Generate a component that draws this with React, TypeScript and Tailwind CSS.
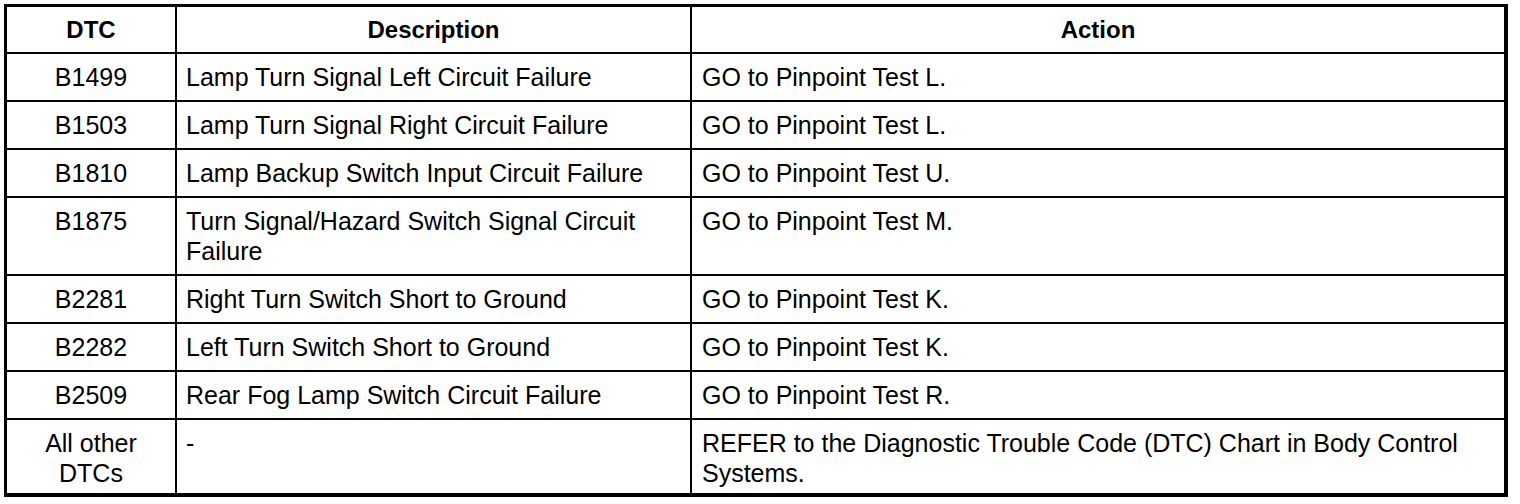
import React from 'react';

type Row = { dtc: string; description: string; action: string };

const ROWS: Row[] = [
  { dtc: 'B1499', description: 'Lamp Turn Signal Left Circuit Failure', action: 'GO to Pinpoint Test L.' },
  { dtc: 'B1503', description: 'Lamp Turn Signal Right Circuit Failure', action: 'GO to Pinpoint Test L.' },
  { dtc: 'B1810', description: 'Lamp Backup Switch Input Circuit Failure', action: 'GO to Pinpoint Test U.' },
  { dtc: 'B1875', description: 'Turn Signal/Hazard Switch Signal Circuit Failure', action: 'GO to Pinpoint Test M.' },
  { dtc: 'B2281', description: 'Right Turn Switch Short to Ground', action: 'GO to Pinpoint Test K.' },
  { dtc: 'B2282', description: 'Left Turn Switch Short to Ground', action: 'GO to Pinpoint Test K.' },
  { dtc: 'B2509', description: 'Rear Fog Lamp Switch Circuit Failure', action: 'GO to Pinpoint Test R.' },
  {
    dtc: 'All other DTCs',
    description: '-',
    action: 'REFER to the Diagnostic Trouble Code (DTC) Chart in Body Control Systems.',
  },
];

export default function App() {
  return (
    <div className="w-[1520px] h-[504px] bg-white pt-[4px] pl-[4px] text-black font-['Liberation_Sans',Arial,sans-serif] text-[25px] leading-[30px]">
      <div className="w-[1504px] border-l-[3px] border-t-[3px] border-r-4 border-b-4 border-black grid grid-cols-[170px_515px_1fr]">
        {/* header */}
        <div className="border-r-2 border-b-2 border-black pt-[8px] pb-[7px] text-center font-bold text-[24px]">DTC</div>
        <div className="border-r-2 border-b-2 border-black pt-[8px] pb-[7px] text-center font-bold text-[24px]">Description</div>
        <div className="border-b-2 border-black pt-[8px] pb-[7px] text-center font-bold text-[24px]">Action</div>

        {ROWS.map((r, i) => {
          const last = i === ROWS.length - 1;
          const rowCls = last ? 'pt-2 pb-[5px]' : 'py-2 border-b-2';
          return (
            <React.Fragment key={r.dtc}>
              <div className={`border-r-2 border-black text-center px-[24px] ${rowCls}`}>{r.dtc}</div>
              <div className={`border-r-2 border-black pl-[9px] pr-2 ${rowCls}`}>{r.description}</div>
              <div className={`border-black pl-[10px] pr-6 ${rowCls}`}>{r.action}</div>
            </React.Fragment>
          );
        })}
      </div>
    </div>
  );
}
